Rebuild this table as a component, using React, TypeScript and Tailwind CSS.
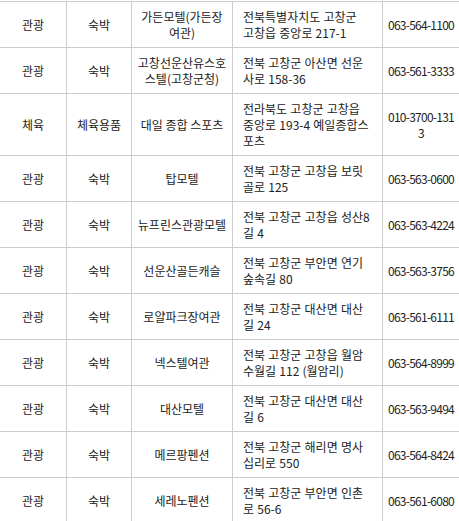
import React from "react";

type Row = {
  a: string;
  b: string;
  name: string[];
  addr: string[];
  tel: string[];
};

const rows: Row[] = [
  { a: "관광", b: "숙박", name: ["가든모텔(가든장", "여관)"], addr: ["전북특별자치도 고창군", "고창읍 중앙로 217-1"], tel: ["063-564-1100"] },
  { a: "관광", b: "숙박", name: ["고창선운산유스호", "스텔(고창군청)"], addr: ["전북 고창군 아산면 선운", "사로 158-36"], tel: ["063-561-3333"] },
  { a: "체육", b: "체육용품", name: ["대일 종합 스포츠"], addr: ["전라북도 고창군 고창읍", "중앙로 193-4 예일종합스", "포츠"], tel: ["010-3700-131", "3"] },
  { a: "관광", b: "숙박", name: ["탑모텔"], addr: ["전북 고창군 고창읍 보릿", "골로 125"], tel: ["063-563-0600"] },
  { a: "관광", b: "숙박", name: ["뉴프린스관광모텔"], addr: ["전북 고창군 고창읍 성산8", "길 4"], tel: ["063-563-4224"] },
  { a: "관광", b: "숙박", name: ["선운산골든캐슬"], addr: ["전북 고창군 부안면 연기", "숲속길 80"], tel: ["063-563-3756"] },
  { a: "관광", b: "숙박", name: ["로얄파크장여관"], addr: ["전북 고창군 대산면 대산", "길 24"], tel: ["063-561-6111"] },
  { a: "관광", b: "숙박", name: ["넥스텔여관"], addr: ["전북 고창군 고창읍 월암", "수월길 112 (월암리)"], tel: ["063-564-8999"] },
  { a: "관광", b: "숙박", name: ["대산모텔"], addr: ["전북 고창군 대산면 대산", "길 6"], tel: ["063-563-9494"] },
  { a: "관광", b: "숙박", name: ["메르팡펜션"], addr: ["전북 고창군 해리면 명사", "십리로 550"], tel: ["063-564-8424"] },
  { a: "관광", b: "숙박", name: ["세레노펜션"], addr: ["전북 고창군 부안면 인촌", "로 56-6"], tel: ["063-561-6080"] },
];

const cellBase =
  "flex items-center border-r border-b border-[#cccccc] pt-[7px] pb-[6px] overflow-hidden";

function Lines({ lines, className = "" }: { lines: string[]; className?: string }) {
  return (
    <div className={className}>
      {lines.map((l, i) => (
        <div key={i} className="whitespace-nowrap">
          {l}
        </div>
      ))}
    </div>
  );
}

export default function App() {
  return (
    <div
      className="min-h-screen bg-white text-[12px] leading-[16px] text-[#222222]"
      style={{ fontFamily: '"Noto Sans CJK KR", "Noto Sans", sans-serif' }}
    >
      <div className="mt-px grid grid-cols-[67px_65px_101px_150px_77px] border-t border-[#cccccc]">
        {rows.map((r, i) => (
          <React.Fragment key={i}>
            <div className={`${cellBase} justify-center px-[5px] text-center`}>
              <span>{r.a}</span>
            </div>
            <div className={`${cellBase} justify-center px-[5px] text-center`}>
              <span>{r.b}</span>
            </div>
            <div className={`${cellBase} justify-center px-[2px] text-center`}>
              <Lines lines={r.name} className="text-center" />
            </div>
            <div className={`${cellBase} justify-start pl-[10px] pr-[4px] text-left [word-spacing:0.5px]`}>
              <Lines lines={r.addr} className="text-left" />
            </div>
            <div className={`${cellBase} justify-center px-[2px] text-center tracking-[-0.75px]`}>
              <Lines lines={r.tel} className="text-center" />
            </div>
          </React.Fragment>
        ))}
      </div>
    </div>
  );
}
